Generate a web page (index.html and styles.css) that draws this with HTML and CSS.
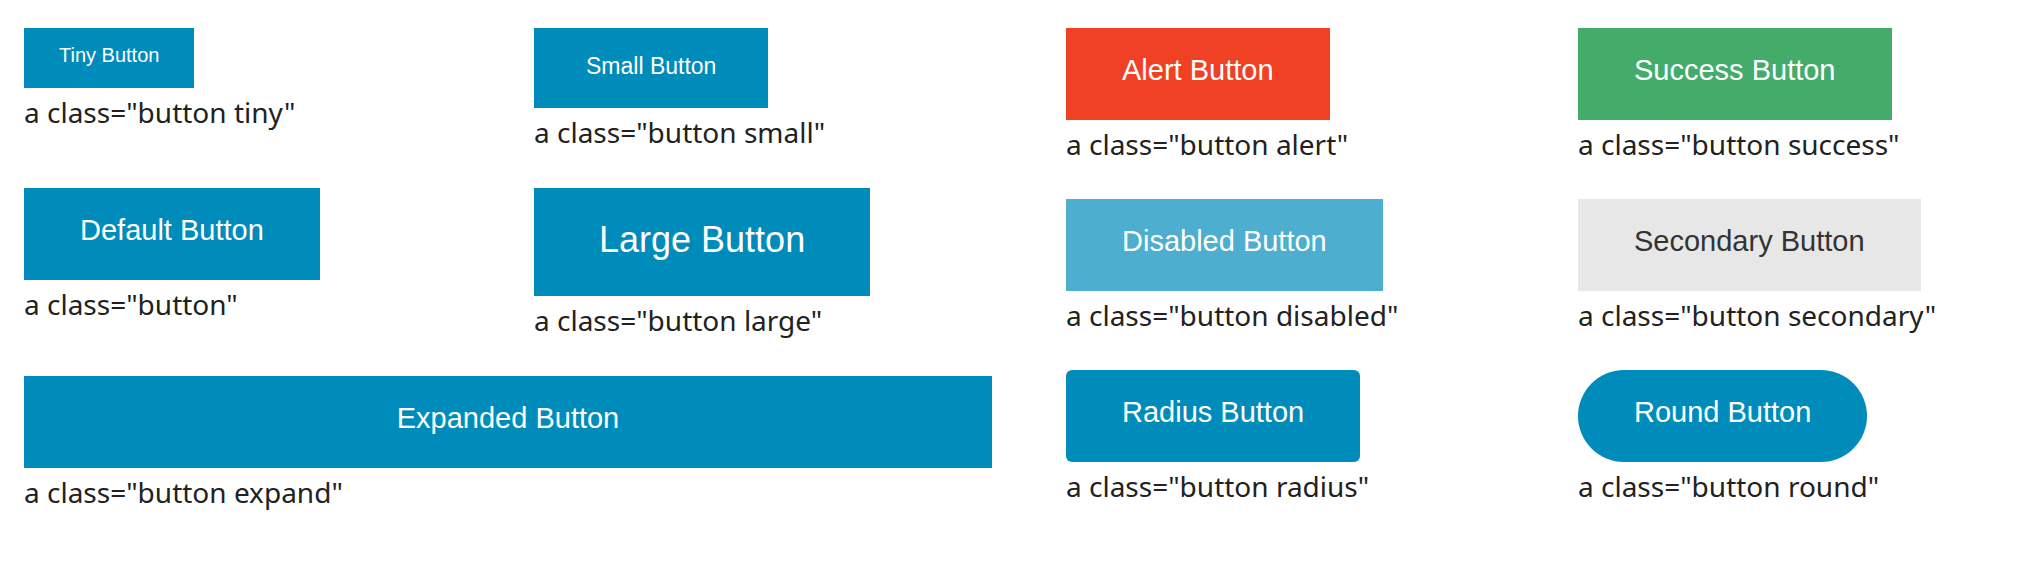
FILE: index.html
```html
<!DOCTYPE html>
<html lang="en">
<head>
<meta charset="utf-8">
<title>Buttons</title>
<link rel="stylesheet" href="styles.css">
</head>
<body>
<main class="showcase">
  <section class="panel sizes">
    <div class="sample"><a href="#" class="button tiny">Tiny Button</a><p class="caption">a class="button tiny"</p></div>
    <div class="sample"><a href="#" class="button small">Small Button</a><p class="caption">a class="button small"</p></div>
    <div class="sample"><a href="#" class="button">Default Button</a><p class="caption">a class="button"</p></div>
    <div class="sample"><a href="#" class="button large">Large Button</a><p class="caption">a class="button large"</p></div>
    <div class="sample wide"><a href="#" class="button expand">Expanded Button</a><p class="caption">a class="button expand"</p></div>
  </section>
  <section class="panel styles">
    <div class="sample"><a href="#" class="button alert">Alert Button</a><p class="caption">a class="button alert"</p></div>
    <div class="sample"><a href="#" class="button success">Success Button</a><p class="caption">a class="button success"</p></div>
    <div class="sample"><a href="#" class="button disabled" aria-disabled="true">Disabled Button</a><p class="caption">a class="button disabled"</p></div>
    <div class="sample"><a href="#" class="button secondary">Secondary Button</a><p class="caption">a class="button secondary"</p></div>
    <div class="sample"><a href="#" class="button radius">Radius Button</a><p class="caption">a class="button radius"</p></div>
    <div class="sample"><a href="#" class="button round">Round Button</a><p class="caption">a class="button round"</p></div>
  </section>
</main>
</body>
</html>
```
FILE: styles.css
```css
* {
  box-sizing: border-box;
}

body {
  margin: 0;
  background: #fff;
  color: #222;
}

.showcase {
  display: grid;
  grid-template-columns: 968fr 938fr;
  column-gap: 74px;
  align-items: start;
  padding: 28px 26px 28px 24px;
}

.panel {
  display: grid;
  row-gap: 38px;
}

.sizes {
  grid-template-columns: 510fr 458fr;
}

.styles {
  grid-template-columns: 512fr 426fr;
  row-gap: 37px;
}

.sample {
  display: flex;
  flex-direction: column;
  align-items: flex-start;
}

.wide {
  grid-column: 1 / -1;
}

.button {
  padding: 25px 56px 33px;
  background: #008cba;
  color: #fff;
  font-family: "Liberation Sans", Arial, sans-serif;
  font-size: 29px;
  line-height: 34px;
  text-align: center;
  text-decoration: none;
  white-space: nowrap;
}

.tiny {
  padding: 15px 35px 21px;
  font-size: 20px;
  line-height: 24px;
}

.small {
  padding: 24px 52px 28px;
  font-size: 23px;
  line-height: 28px;
}

.large {
  padding: 31px 65px 35px;
  font-size: 36px;
  line-height: 42px;
}

.expand {
  align-self: stretch;
}

.alert {
  background: #f04124;
}

.success {
  background: #43ac6a;
}

.disabled {
  background: #4daecf;
  cursor: default;
}

.secondary {
  background: #e7e7e7;
  color: #333;
}

.radius {
  border-radius: 6px;
}

.round {
  border-radius: 46px;
}

.caption {
  margin: 6px 0 0;
  font-family: "Noto Sans", sans-serif;
  font-size: 28px;
  line-height: 36px;
  white-space: nowrap;
}
```
